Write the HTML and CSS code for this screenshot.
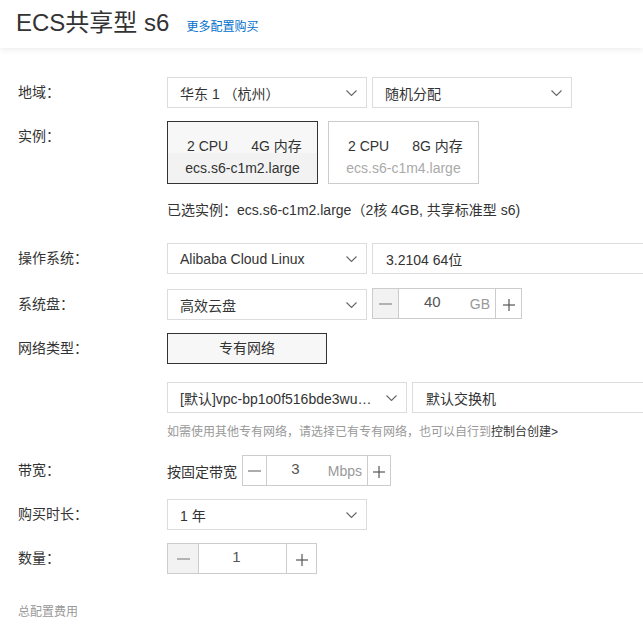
FILE: index.html
```html
<!DOCTYPE html>
<html lang="zh-CN">
<head>
  <meta charset="UTF-8" />
  <meta name="viewport" content="width=device-width, initial-scale=1.0"/>
  <title>ECS共享型 s6</title>
  <link rel="stylesheet" href="styles.css">
</head>
<body>
  <!-- 顶部标题 -->
  <div class="header">
    <h1 class="title">ECS共享型 s6</h1>
    <a class="more-link" href="#">更多配置购买</a>
  </div>

  <div class="form">
    <!-- 地域 -->
    <div class="row row-region">
      <div class="label">地域：</div>
      <div class="controls">
        <div class="select">
          <span>华东 1 （杭州）</span>
          <svg class="arrow" width="11" height="6" viewBox="0 0 11 6"><polyline points="0.5,0.5 5.5,5.5 10.5,0.5" fill="none" stroke="#666" stroke-width="1.1"/></svg>
        </div>
        <div class="select">
          <span>随机分配</span>
          <svg class="arrow" width="11" height="6" viewBox="0 0 11 6"><polyline points="0.5,0.5 5.5,5.5 10.5,0.5" fill="none" stroke="#666" stroke-width="1.1"/></svg>
        </div>
      </div>
    </div>

    <!-- 实例 -->
    <div class="row row-instance">
      <div class="label">实例：</div>
      <div class="controls cards">
        <div class="card selected">
          <div class="card-spec"><span>2 CPU</span><span>4G 内存</span></div>
          <div class="card-name">ecs.s6-c1m2.large</div>
        </div>
        <div class="card">
          <div class="card-spec"><span>2 CPU</span><span>8G 内存</span></div>
          <div class="card-name">ecs.s6-c1m4.large</div>
        </div>
      </div>
    </div>

    <div class="note">已选实例：ecs.s6-c1m2.large（2核 4GB, 共享标准型 s6)</div>

    <!-- 操作系统 -->
    <div class="row row-os">
      <div class="label">操作系统：</div>
      <div class="controls">
        <div class="select">
          <span>Alibaba Cloud Linux</span>
          <svg class="arrow" width="11" height="6" viewBox="0 0 11 6"><polyline points="0.5,0.5 5.5,5.5 10.5,0.5" fill="none" stroke="#666" stroke-width="1.1"/></svg>
        </div>
        <div class="select select-wide">
          <span>3.2104 64位</span>
        </div>
      </div>
    </div>

    <!-- 系统盘 -->
    <div class="row row-disk">
      <div class="label">系统盘：</div>
      <div class="controls">
        <div class="select">
          <span>高效云盘</span>
          <svg class="arrow" width="11" height="6" viewBox="0 0 11 6"><polyline points="0.5,0.5 5.5,5.5 10.5,0.5" fill="none" stroke="#666" stroke-width="1.1"/></svg>
        </div>
        <div class="stepper stepper-disk">
          <span class="step-btn minus disabled"><svg width="13" height="2" viewBox="0 0 13 2"><line x1="0" y1="1" x2="13" y2="1" stroke="#999" stroke-width="1.4"/></svg></span>
          <span class="step-input"><span class="step-value">40</span><span class="step-unit">GB</span></span>
          <span class="step-btn plus"><svg width="12" height="12" viewBox="0 0 12 12"><line x1="0" y1="6" x2="12" y2="6" stroke="#555" stroke-width="1.2"/><line x1="6" y1="0" x2="6" y2="12" stroke="#555" stroke-width="1.2"/></svg></span>
        </div>
      </div>
    </div>

    <!-- 网络类型 -->
    <div class="row row-network">
      <div class="label">网络类型：</div>
      <div class="controls">
        <div class="option-btn">专有网络</div>
      </div>
    </div>

    <div class="row row-vpc">
      <div class="label"></div>
      <div class="controls">
        <div class="select select-vpc">
          <span>[默认]vpc-bp1o0f516bde3wu…</span>
          <svg class="arrow" width="11" height="6" viewBox="0 0 11 6"><polyline points="0.5,0.5 5.5,5.5 10.5,0.5" fill="none" stroke="#666" stroke-width="1.1"/></svg>
        </div>
        <div class="select select-wide">
          <span>默认交换机</span>
        </div>
      </div>
    </div>

    <div class="hint">如需使用其他专有网络，请选择已有专有网络，也可以自行到<a href="#">控制台创建&gt;</a></div>

    <!-- 带宽 -->
    <div class="row row-bandwidth">
      <div class="label">带宽：</div>
      <div class="controls">
        <span class="inline-text">按固定带宽</span>
        <div class="stepper stepper-bw">
          <span class="step-btn minus"><svg width="13" height="2" viewBox="0 0 13 2"><line x1="0" y1="1" x2="13" y2="1" stroke="#888" stroke-width="1.4"/></svg></span>
          <span class="step-input"><span class="step-value">3</span><span class="step-unit">Mbps</span></span>
          <span class="step-btn plus"><svg width="12" height="12" viewBox="0 0 12 12"><line x1="0" y1="6" x2="12" y2="6" stroke="#555" stroke-width="1.2"/><line x1="6" y1="0" x2="6" y2="12" stroke="#555" stroke-width="1.2"/></svg></span>
        </div>
      </div>
    </div>

    <!-- 购买时长 -->
    <div class="row row-duration">
      <div class="label">购买时长：</div>
      <div class="controls">
        <div class="select">
          <span>1 年</span>
          <svg class="arrow" width="11" height="6" viewBox="0 0 11 6"><polyline points="0.5,0.5 5.5,5.5 10.5,0.5" fill="none" stroke="#666" stroke-width="1.1"/></svg>
        </div>
      </div>
    </div>

    <!-- 数量 -->
    <div class="row row-count">
      <div class="label">数量：</div>
      <div class="controls">
        <div class="stepper stepper-count">
          <span class="step-btn minus disabled"><svg width="13" height="2" viewBox="0 0 13 2"><line x1="0" y1="1" x2="13" y2="1" stroke="#999" stroke-width="1.4"/></svg></span>
          <span class="step-input"><span class="step-value">1</span></span>
          <span class="step-btn plus"><svg width="12" height="12" viewBox="0 0 12 12"><line x1="0" y1="6" x2="12" y2="6" stroke="#555" stroke-width="1.2"/><line x1="6" y1="0" x2="6" y2="12" stroke="#555" stroke-width="1.2"/></svg></span>
        </div>
      </div>
    </div>

    <div class="total">总配置费用</div>
  </div>
</body>
</html>
```

FILE: styles.css
```css
html, body {
  overflow-x: hidden;
}

body {
  margin: 0;
  font-family: "Liberation Sans", "Noto Sans CJK SC", sans-serif;
  font-size: 14px;
  color: #333;
  background: #fff;
}

.header {
  display: flex;
  align-items: baseline;
  height: 48px;
  box-sizing: border-box;
  padding: 11px 0 0 16px;
  box-shadow: 0 2px 6px rgba(0, 0, 0, 0.07);
}

.title {
  margin: 0;
  font-size: 24px;
  line-height: 24px;
  font-weight: normal;
  color: #333;
}

.more-link {
  margin-left: 17px;
  font-size: 12px;
  color: #0070cc;
  text-decoration: none;
}

.form {
  padding: 29px 0 0 18px;
}

.row {
  display: flex;
  align-items: flex-start;
  margin-bottom: 13px;
}

.label {
  flex: none;
  width: 149px;
  line-height: 31px;
}

.controls {
  display: flex;
  align-items: center;
  flex: 1;
  min-width: 0;
  gap: 5px;
  white-space: nowrap;
}

.select {
  display: flex;
  align-items: center;
  justify-content: space-between;
  width: 200px;
  height: 31px;
  box-sizing: border-box;
  padding: 0 9px 0 12px;
  border: 1px solid #dcdcdc;
  flex: none;
}

.select-vpc {
  width: 240px;
}

/* 右侧被页面边缘截断的输入框 */
.select-wide {
  flex: 1;
  width: auto;
  padding-left: 13px;
  border-right: none;
}

.arrow {
  flex: none;
}

/* 实例卡片 */
.cards {
  gap: 10px;
}

.card {
  width: 151px;
  height: 63px;
  box-sizing: border-box;
  border: 1px solid #ccc;
  background: #fff;
}

.card.selected {
  border-color: #333;
}

.card-spec {
  display: flex;
  gap: 23px;
  height: 31px;
  box-sizing: border-box;
  padding: 16px 0 0 19px;
  line-height: 16px;
}

.card-name {
  height: 30px;
  line-height: 30px;
  text-align: center;
  color: #aaa;
}

.card.selected .card-spec {
  background: #f7f7f7;
}

.card.selected .card-name {
  background: #f2f2f2;
  color: #333;
}

.row-instance {
  margin-bottom: 16px;
}

.note {
  padding-left: 149px;
  line-height: 20px;
  margin-bottom: 23px;
}

.row-os {
  margin-bottom: 15px;
}

/* 数字输入 */
.stepper {
  display: flex;
  height: 31px;
  box-sizing: border-box;
  border: 1px solid #ccc;
  flex: none;
}

.step-btn {
  display: flex;
  align-items: center;
  justify-content: center;
  background: #fff;
}

.step-btn.disabled {
  background: #f2f2f2;
}

.step-btn.plus svg {
  margin-top: 3px;
}

.step-input {
  display: flex;
  align-items: center;
  flex: 1;
  border-left: 1px solid #ccc;
  border-right: 1px solid #ccc;
  padding-right: 5px;
}

.step-value {
  flex: 1;
  text-align: center;
  font-size: 15px;
  color: #555;
  margin-top: -4px;
}

.step-unit {
  margin-left: 4px;
  color: #999;
}

.stepper-disk {
  width: 150px;
  margin-top: -2px;
}

.stepper-disk .minus {
  width: 25px;
}

.stepper-disk .plus {
  width: 25px;
}

.stepper-bw {
  width: 149px;
}

.stepper-bw .minus {
  width: 23px;
}

.stepper-bw .plus {
  width: 22px;
}

.stepper-count {
  width: 150px;
}

.stepper-count .minus {
  width: 30px;
}

.stepper-count .plus {
  width: 29px;
}

.stepper-count .step-input {
  padding-right: 12px;
}

.option-btn {
  width: 160px;
  height: 31px;
  box-sizing: border-box;
  border: 1px solid #333;
  background: #f7f7f7;
  line-height: 29px;
  text-align: center;
}

.row-network {
  margin-bottom: 18px;
}

.row-vpc {
  margin-bottom: 10px;
}

.hint {
  padding-left: 149px;
  font-size: 12px;
  line-height: 18px;
  color: #999;
  margin-bottom: 14px;
}

.hint a {
  color: #333;
  text-decoration: none;
}

.inline-text {
  flex: none;
}

.total {
  margin-top: 29px;
  font-size: 12px;
  line-height: 18px;
  color: #999;
}
```
